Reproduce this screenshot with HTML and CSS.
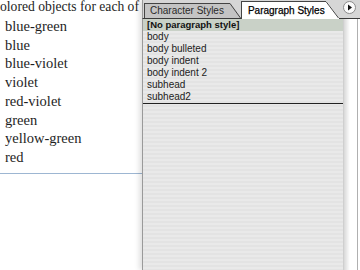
FILE: index.html
```html
<!DOCTYPE html>
<html lang="en">
<head>
    <meta charset="UTF-8">
    <meta name="viewport" content="width=device-width, initial-scale=1.0">
    <title>Paragraph Styles</title>
    <link rel="stylesheet" href="styles.css">
</head>
<body>
    <div class="doc">
        <p class="lead">colored objects for each of</p>
        <ul class="colors">
            <li>blue-green</li>
            <li>blue</li>
            <li>blue-violet</li>
            <li>violet</li>
            <li>red-violet</li>
            <li>green</li>
            <li>yellow-green</li>
            <li>red</li>
        </ul>
    </div>

    <div class="palette">
        <div class="tabs">
            <div class="tab">
                <span class="tab-label">Character Styles</span>
                <svg class="ear" width="11" height="15" viewBox="0 0 11 15">
                    <polygon points="0,0 0.5,0 11,15 0,15" fill="#c4c4c4"/>
                    <line x1="0" y1="0.5" x2="10.5" y2="15" stroke="#444" stroke-width="1"/>
                </svg>
            </div>
            <div class="tab active">
                <span class="tab-label">Paragraph Styles</span>
                <svg class="ear" width="13" height="18" viewBox="0 0 13 18">
                    <polygon points="0,0 0.5,0 13,17 13,18 0,18" fill="#fff"/>
                    <line x1="0" y1="0.5" x2="12.5" y2="17" stroke="#444" stroke-width="1"/>
                </svg>
            </div>
            <div class="menu-btn">
                <svg width="13" height="13" viewBox="0 0 13 13">
                    <circle cx="6.5" cy="6.5" r="6" fill="#fafafa" stroke="#8a8a8a"/>
                    <polygon points="5,3.5 9,6.5 5,9.5" fill="#111"/>
                </svg>
            </div>
        </div>

        <div class="panel-body">
            <div class="style-list">
                <div class="row selected">[No paragraph style]</div>
                <div class="row">body</div>
                <div class="row">body bulleted</div>
                <div class="row">body indent</div>
                <div class="row">body indent 2</div>
                <div class="row">subhead</div>
                <div class="row">subhead2</div>
            </div>
            <div class="gutter"></div>
        </div>
    </div>
</body>
</html>
```

FILE: styles.css
```css
body {
    margin: 0;
    width: 360px;
    height: 270px;
    overflow: hidden;
    display: flex;
    background-color: #fff;
}

/* document page on the left */
.doc {
    width: 142px;
    flex: none;
    overflow: hidden;
    font-family: "Liberation Serif", "Times New Roman", serif;
    font-size: 14.5px;
    line-height: 18.75px;
    color: #1e1e1e;
}

.lead {
    margin: -2px 0 0 -6px;
    font-size: 13.6px;
    white-space: nowrap;
}

.colors {
    list-style: none;
    margin: 0;
    padding: 0 0 6px 5px;
    border-bottom: 1px solid #9db6d2;
}

/* palette */
.palette {
    flex: 1;
    display: flex;
    flex-direction: column;
    box-shadow: -3px 0 5px rgba(0, 0, 0, 0.12);
}

.tabs {
    height: 18px;
    display: flex;
    align-items: flex-end;
    padding-left: 1px;
    background-color: #d6d6d6;
    border-left: 1px solid #9a9a9a;
    border-bottom: 1px solid #3a3a3a;
    font-family: "Liberation Sans", Arial, sans-serif;
    font-size: 10px;
}

.tab {
    display: flex;
    align-items: flex-end;
}

.tab-label {
    height: 14px;
    line-height: 14px;
    padding: 0 6px 0 5px;
    white-space: nowrap;
    background-color: #c4c4c4;
    border-top: 1px solid #444;
    border-left: 1px solid #444;
    color: #2a2a2a;
}

.tab.active {
    margin-bottom: -1px;
}

.tab.active .tab-label {
    height: 17px;
    line-height: 18px;
    padding: 0 1px 0 6px;
    background-color: #fff;
    color: #000;
    -webkit-text-stroke: 0.25px #000;
}

.ear {
    display: block;
}

.menu-btn {
    align-self: flex-start;
    margin: 1px 0 0 4px;
    height: 13px;
}

.menu-btn svg {
    display: block;
}

.panel-body {
    flex: 1;
    display: flex;
}

.style-list {
    width: 200px;
    border-left: 1px solid #9a9a9a;
    border-right: 1px solid #cfcfcf;
    background: repeating-linear-gradient(to bottom, #e9e9e9 0, #e9e9e9 2px, #e3e3e3 2px, #e3e3e3 4px);
    font-family: "Liberation Sans", Arial, sans-serif;
    font-size: 10px;
    color: #222;
}

.style-list .row:last-child {
    border-bottom: 1px solid #222;
}

.row {
    height: 12px;
    line-height: 12px;
    padding-left: 4px;
}

.row.selected {
    background-color: #c9d1c7;
    font-weight: bold;
    font-size: 9.5px;
    color: #111;
}

.gutter {
    flex: 1;
    background: linear-gradient(to right, #d8d8d8 0, #fff 6px, #fff 13px, #b0b0b0 13px, #b0b0b0 14px, #fff 14px);
}
```
